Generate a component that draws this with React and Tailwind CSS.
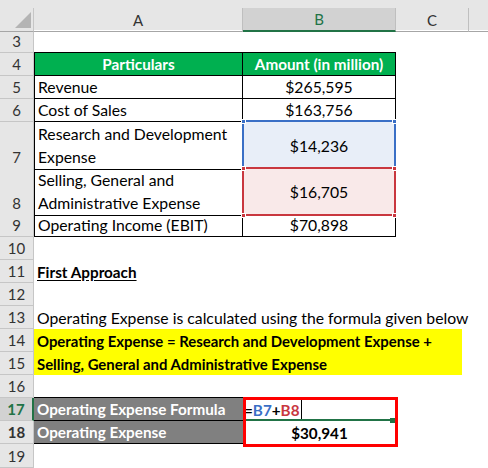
import React from "react";

const cols = "grid grid-cols-[34px_209px_153px_73px_1fr]";

const RowHead = ({ n, selected, bottom }) => (
  <div
    className={
      selected
        ? "flex items-center justify-center text-[15px] border-b border-b-[#c6c6c6] border-r-2 border-r-[#217346] bg-[#d2d2d2] text-[#217346]"
        : bottom
        ? "flex items-end justify-center pb-[1px] text-[15px] border-b border-r border-[#c6c6c6] bg-[#e6e6e6] text-[#333]"
        : "flex items-center justify-center text-[15px] border-b border-r border-[#c6c6c6] bg-[#e6e6e6] text-[#333]"
    }
  >
    {n}
  </div>
);

const Handle = ({ className }) => (
  <div className={`absolute w-[5px] h-[5px] border border-white ${className}`} />
);

const App = () => {
  return (
    <div className="w-[488px] h-[468px] overflow-hidden bg-white text-[15.75px] leading-[22px] text-black [font-family:Lato,sans-serif]">
      {/* top strip */}
      <div className="h-[8px] bg-[#e6e6e6]" />

      {/* column headers */}
      <div className={`${cols} h-[22px] bg-[#e6e6e6] text-[#333] text-[15px]`}>
        <div className="relative border-r border-b border-[#a6a6a6] border-r-[#c6c6c6]">
          <svg className="absolute left-[15px] top-[4px]" width="16" height="16" viewBox="0 0 16 16">
            <polygon points="16,0 16,16 0,16" fill="#b4b4b4" />
          </svg>
        </div>
        <div className="flex items-center justify-center border-r border-r-[#bfbfbf] border-b border-b-[#a6a6a6]">A</div>
        <div className="flex items-center justify-center border-r border-r-[#bfbfbf] border-b-2 border-b-[#217346] bg-[#d2d2d2] text-[#217346]">
          B
        </div>
        <div className="flex items-center justify-center border-r border-r-[#bfbfbf] border-b border-b-[#a6a6a6]">C</div>
        <div className="border-b border-b-[#a6a6a6]" />
      </div>

      {/* row 3 */}
      <div className={`${cols} h-[23px]`}>
        <RowHead n="3" />
        <div className="border-b border-black" />
        <div className="border-b border-black" />
      </div>

      {/* row 4 */}
      <div className={`${cols} h-[23px]`}>
        <RowHead n="4" />
        <div className="flex items-center justify-center border-l border-b border-r border-black bg-[#00b050] text-[15.25px] font-bold text-white">
          Particulars
        </div>
        <div className="flex items-center justify-center border-b border-r border-black bg-[#00b050] text-[15.25px] font-bold text-white">
          Amount (in million)
        </div>
      </div>

      {/* row 5 */}
      <div className={`${cols} h-[23px]`}>
        <RowHead n="5" />
        <div className="flex items-center pl-[3px] border-l border-b border-r border-black">Revenue</div>
        <div className="flex items-center justify-center border-b border-r border-black">$265,595</div>
      </div>

      {/* row 6 */}
      <div className={`${cols} h-[23px]`}>
        <RowHead n="6" />
        <div className="flex items-center pl-[3px] border-l border-b border-r border-black">Cost of Sales</div>
        <div className="flex items-center justify-center border-b border-r border-black">$163,756</div>
      </div>

      {/* row 7 */}
      <div className={`${cols} h-[46px]`}>
        <RowHead n="7" bottom />
        <div className="flex items-end pl-[3px] pb-[1px] leading-[23px] border-l border-b border-r border-black">
          Research and Development Expense
        </div>
        <div className="relative flex items-center justify-center bg-[#e8eef8] border-b border-r border-black">
          $14,236
          <div className="absolute -left-[1px] -top-[2px] -right-[1px] -bottom-[1px] border-2 border-[#3a6fc6]" />
          <Handle className="-left-[2px] -top-[3px] bg-[#3a6fc6]" />
          <Handle className="-right-[2px] -top-[3px] bg-[#3a6fc6]" />
        </div>
      </div>

      {/* row 8 */}
      <div className={`${cols} h-[46px]`}>
        <RowHead n="8" bottom />
        <div className="flex items-end pl-[3px] pb-[1px] leading-[23px] border-l border-b border-r border-black">
          Selling, General and Administrative Expense
        </div>
        <div className="relative flex items-center justify-center bg-[#f9e9e9] border-b border-r border-black">
          $16,705
          <div className="absolute -left-[1px] -top-[1px] -right-[1px] -bottom-[1px] border-2 border-[#c9373f]" />
          <Handle className="-left-[2px] -top-[2px] bg-[#c9373f]" />
          <Handle className="-right-[2px] -top-[2px] bg-[#c9373f]" />
          <Handle className="-left-[2px] -bottom-[3px] bg-[#c9373f]" />
          <Handle className="-right-[2px] -bottom-[3px] bg-[#c9373f]" />
        </div>
      </div>

      {/* row 9 */}
      <div className={`${cols} h-[23px]`}>
        <RowHead n="9" />
        <div className="flex items-center pl-[3px] border-l border-b border-r border-black">Operating Income (EBIT)</div>
        <div className="flex items-center justify-center border-b border-r border-black">$70,898</div>
      </div>

      <div className={`${cols} h-[23px]`}>
        <RowHead n="10" />
      </div>

      <div className={`${cols} h-[23px]`}>
        <RowHead n="11" />
        <div className="flex items-center pl-[3px] text-[15.25px] font-bold underline underline-offset-2 whitespace-nowrap">
          First Approach
        </div>
      </div>

      <div className={`${cols} h-[23px]`}>
        <RowHead n="12" />
      </div>

      <div className={`${cols} h-[23px]`}>
        <RowHead n="13" />
        <div className="col-span-4 flex items-center pl-[3px] whitespace-nowrap">
          Operating Expense is calculated using the formula given below
        </div>
      </div>

      {/* rows 14-15 */}
      <div className={`${cols} h-[23px]`}>
        <RowHead n="14" />
        <div className="col-span-4 w-[428px] flex items-center pl-[3px] whitespace-nowrap bg-[#ffff00] text-[14.9px] font-bold">
          Operating Expense = Research and Development Expense +
        </div>
      </div>
      <div className={`${cols} h-[23px]`}>
        <RowHead n="15" />
        <div className="col-span-4 w-[428px] flex items-center pl-[3px] whitespace-nowrap bg-[#ffff00] text-[14.9px] font-bold">
          Selling, General and Administrative Expense
        </div>
      </div>

      <div className={`${cols} h-[23px]`}>
        <RowHead n="16" />
        <div className="border-b border-black" />
      </div>

      {/* rows 17-18 */}
      <div className="relative text-[15.25px] font-bold">
        <div className={`${cols} h-[23px]`}>
          <RowHead n="17" selected />
          <div className="flex items-center pl-[3px] border-b border-black bg-[#808080] text-white whitespace-nowrap">
            Operating Expense Formula
          </div>
          <div className="relative flex items-center pl-[1px]">
            <span>=</span>
            <span className="text-[#3a6fc6]">B7</span>
            <span>+</span>
            <span className="text-[#c9373f]">B8</span>
            <span className="ml-[1px] w-px h-[20px] bg-black" />
            <div className="absolute left-0 right-[4px] bottom-0 h-[2px] bg-[#217346]" />
            <div className="absolute right-[1px] -bottom-[2px] w-[5px] h-[5px] bg-[#217346]" />
          </div>
        </div>
        <div className={`${cols} h-[23px]`}>
          <RowHead n="18" />
          <div className="flex items-center pl-[3px] border-b border-black bg-[#808080] text-white whitespace-nowrap">
            Operating Expense
          </div>
          <div className="flex items-center justify-center">$30,941</div>
        </div>
        <div className="absolute left-[243px] top-[-1px] w-[155px] h-[50px] border-[3px] border-[#ff0000]" />
      </div>

      <div className={`${cols} h-[24px]`}>
        <RowHead n="19" />
      </div>
    </div>
  );
};

export default App;
